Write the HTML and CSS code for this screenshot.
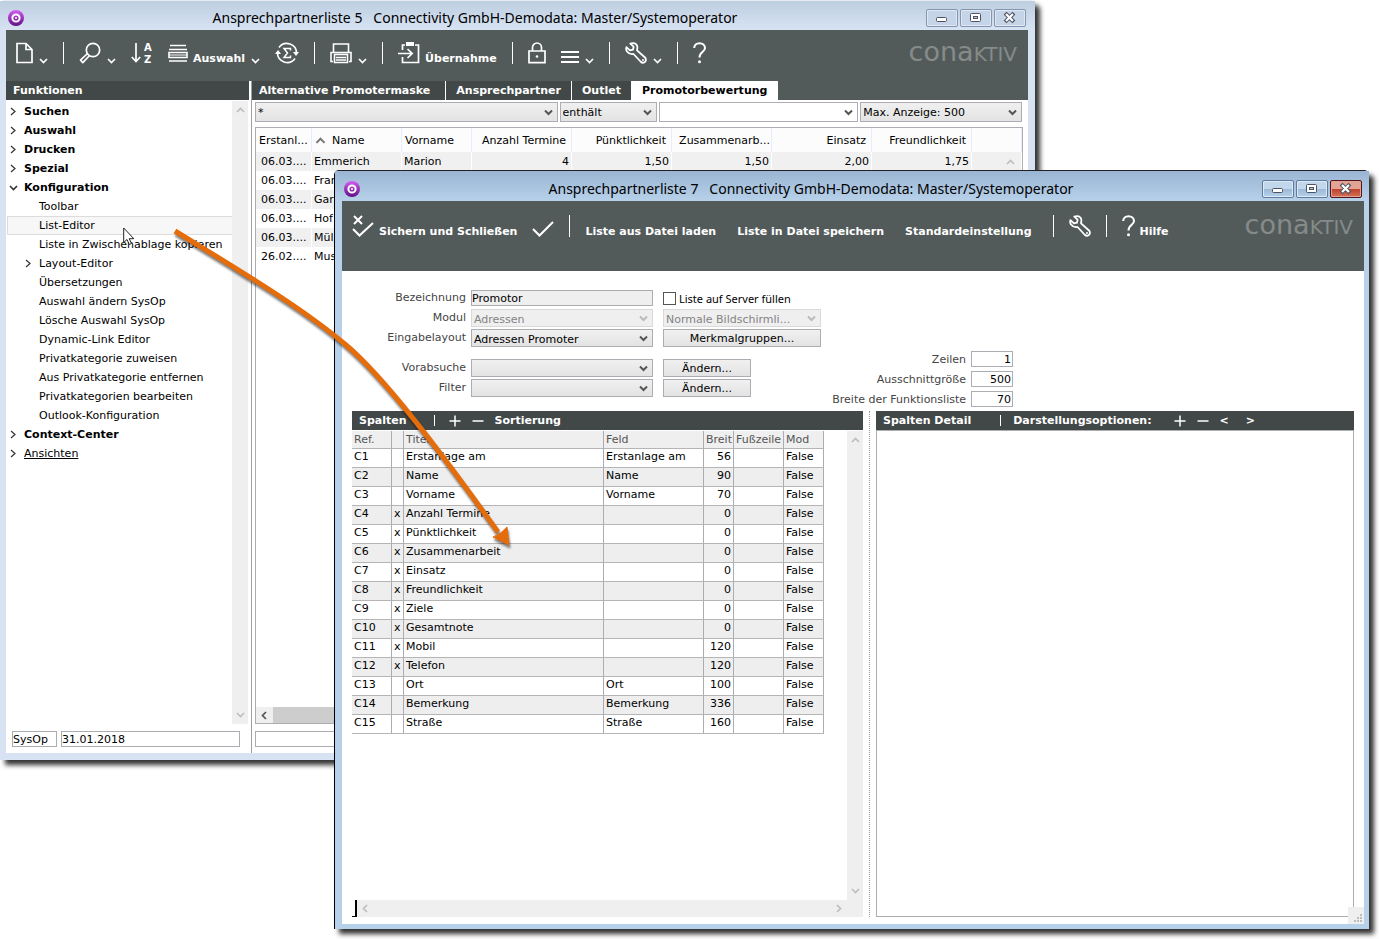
FILE: index.html
```html
<!DOCTYPE html>
<html lang="de">
<head>
<meta charset="utf-8">
<title>Ansprechpartnerliste</title>
<link rel="stylesheet" href="styles.css">
</head>
<body>
<svg class="symbols" aria-hidden="true">
  <defs>
    <linearGradient id="orb-fill" x1="0" y1="0" x2="0" y2="1"><stop offset="0" stop-color="#d65cf5"/><stop offset="1" stop-color="#5f0f82"/></linearGradient>
    <symbol id="orb" viewBox="0 0 16 16"><circle cx="8" cy="8" r="8" fill="url(#orb-fill)"/><circle cx="8" cy="8" r="3.6" fill="none" stroke="#fff" stroke-width="2"/><circle cx="8" cy="8" r="1" fill="#fff"/></symbol>
    <symbol id="down" viewBox="0 0 9 6"><path d="M1 1l3.500 3.500L8 1" fill="none" stroke="currentColor" stroke-width="1.600"/></symbol>
    <symbol id="wrench" viewBox="0 0 22 22"><path d="M8 1.200C10.500 1.200 12.500 3 12.400 5.500L12 8.300L20 15.500C21.500 17 21 19.500 19.500 20.300C18 21.200 16.600 20.600 15.500 19.500L8.500 12C6 12.500 3.500 11.500 2 9.500C1 8 1 6.500 1.400 5.200L5 8.400L8 7.700L8.600 4.700L5.300 1.600C6 1.300 7 1.200 8 1.200Z" fill="none" stroke="currentColor" stroke-width="1.800" stroke-linejoin="round"/><circle cx="18" cy="18" r="1" fill="currentColor"/></symbol>
    <symbol id="help" viewBox="0 0 13 22"><path d="M1.200 6C1.200 3 3.500 1.200 6.500 1.200S12 3.200 12 6C12 10 6.500 9.500 6.500 15.500" fill="none" stroke="currentColor" stroke-width="2"/><circle cx="6.500" cy="19.700" r="1.500" fill="currentColor"/></symbol>
    <symbol id="min" viewBox="0 0 32 18"><rect x="10.500" y="8.500" width="10" height="4" rx="1" fill="#fff" stroke="#4c5363"/></symbol>
    <symbol id="max" viewBox="0 0 32 18"><rect x="10.500" y="4.500" width="10" height="8" rx="1" fill="#fff" stroke="#4c5363"/><rect x="13.500" y="7.500" width="4" height="2" fill="#b8cbe0" stroke="#4c5363"/></symbol>
    <symbol id="close" viewBox="0 0 32 18"><path d="M12.500 5.500l6 6M18.500 5.500l-6 6" stroke="#4c5363" stroke-width="4" stroke-linecap="square"/><path d="M12 5l7 7M19 5l-7 7" stroke="#fff" stroke-width="2.200"/></symbol>
    <symbol id="right" viewBox="0 0 6 9"><path d="M1 1l4 3.500L1 8" fill="none" stroke="currentColor" stroke-width="1.200"/></symbol>
    <symbol id="bar-up" viewBox="0 0 9 6"><path d="M1 5l3.500-3.500L8 5" fill="none" stroke="currentColor" stroke-width="1.700"/></symbol>
    <symbol id="bar-left" viewBox="0 0 6 9"><path d="M5 1L1.500 4.500L5 8" fill="none" stroke="currentColor" stroke-width="1.700"/></symbol>
    <symbol id="bar-right" viewBox="0 0 6 9"><path d="M1 1l3.500 3.500L1 8" fill="none" stroke="currentColor" stroke-width="1.700"/></symbol>
    <symbol id="plus" viewBox="0 0 12 12"><path d="M6 .5v11M.5 6h11" stroke="currentColor" stroke-width="1.500"/></symbol>
    <symbol id="minus" viewBox="0 0 12 12"><path d="M.5 6h11" stroke="currentColor" stroke-width="1.500"/></symbol>
  </defs>
</svg>

<main class="desktop">
  <section class="window window-back">
    <header class="titlebar">
      <svg class="orb"><use href="#orb"/></svg>
      <h1 class="title">Ansprechpartnerliste 5 &nbsp; Connectivity GmbH-Demodata: Master/Systemoperator</h1>
      <div class="controls">
        <button class="control" aria-label="Minimieren"><svg><use href="#min"/></svg></button>
        <button class="control" aria-label="Maximieren"><svg><use href="#max"/></svg></button>
        <button class="control" aria-label="Schließen"><svg><use href="#close"/></svg></button>
      </div>
    </header>
    <nav class="toolbar">
      <button class="tool" aria-label="Neu"><svg class="icon w17" viewBox="0 0 17 22"><path d="M1 1.500h9l6 6v13H1zM10 1.500v6h6" fill="none" stroke="currentColor" stroke-width="1.700"/></svg><svg class="chev"><use href="#down"/></svg></button>
      <span class="sep"></span>
      <button class="tool" aria-label="Suchen"><svg class="icon w22" viewBox="0 0 22 22"><circle cx="14" cy="8" r="6.700" fill="none" stroke="currentColor" stroke-width="1.700"/><path d="M8.500 11.500L1.500 18.200L3.800 20.600L10.600 13.500" fill="none" stroke="currentColor" stroke-width="1.700" stroke-linejoin="round"/></svg><svg class="chev"><use href="#down"/></svg></button>
      <button class="tool" aria-label="Sortieren"><svg class="icon w22" viewBox="0 0 22 22"><path d="M5 1v18M.8 15L5 19.500L9.200 15" fill="none" stroke="currentColor" stroke-width="1.700"/><text x="13" y="9" class="sort-text">A</text><text x="13" y="21" class="sort-text">Z</text></svg></button>
      <button class="tool"><svg class="icon w20" viewBox="0 0 20 22"><path d="M2 3.500h16M1 7.500h18M1 10.500h18v5H1zM1 19h18" fill="none" stroke="currentColor" stroke-width="1.600"/><path d="M1 13h18" stroke="currentColor"/></svg><span>Auswahl</span><svg class="chev"><use href="#down"/></svg></button>
      <button class="tool" aria-label="Summen"><svg class="icon w24" viewBox="0 0 24 22"><path d="M4 5.500A9.700 9.700 0 0 1 21.500 11.500M20 16.500A9.700 9.700 0 0 1 2.500 10.500" fill="none" stroke="currentColor" stroke-width="1.600"/><path d="M18 10h6l-3 4zM0 12h6L3 8z" fill="currentColor"/><path d="M15.500 8.500v-2H9l3.500 4.500L9 15.500h6.500v-2" fill="none" stroke="currentColor" stroke-width="1.500"/></svg></button>
      <span class="sep"></span>
      <button class="tool" aria-label="Drucken"><svg class="icon w22" viewBox="0 0 22 22"><path d="M3.500 10V2h15v8M3 19.500H1V10.500h20v9h-2M4.500 12.500h13v8h-13zM6 15.500h10M6 18h10" fill="none" stroke="currentColor" stroke-width="1.600"/></svg><svg class="chev"><use href="#down"/></svg></button>
      <span class="sep"></span>
      <button class="tool"><svg class="icon w22" viewBox="0 0 22 22"><path d="M4.500 8V3H7M17 3h3.500v17.500h-16V15M0 11.500h14M9.500 7l4.700 4.500L9.500 16" fill="none" stroke="currentColor" stroke-width="1.700"/><path d="M8 0h8v4H8z" fill="currentColor"/></svg><span>Übernahme</span></button>
      <span class="sep"></span>
      <button class="tool" aria-label="Sperren"><svg class="icon w18" viewBox="0 0 18 22"><path d="M1 9h16v11.700H1zM4.500 9V5.500a4.500 4.500 0 0 1 9 0V9" fill="none" stroke="currentColor" stroke-width="1.700"/><circle cx="9" cy="14.500" r="1.300" fill="currentColor"/></svg></button>
      <button class="tool" aria-label="Menü"><svg class="icon w18" viewBox="0 0 18 22"><path d="M0 10h18M0 15h18M0 20h18" stroke="currentColor" stroke-width="2"/></svg><svg class="chev"><use href="#down"/></svg></button>
      <span class="sep"></span>
      <button class="tool" aria-label="Werkzeuge"><svg class="icon w22"><use href="#wrench"/></svg><svg class="chev"><use href="#down"/></svg></button>
      <span class="sep"></span>
      <button class="tool" aria-label="Hilfe"><svg class="icon w13"><use href="#help"/></svg></button>
      <span class="logo">cona<span class="logo-caps">KTIV</span></span>
    </nav>
    <div class="workspace">
      <aside class="sidebar">
        <h2 class="bar">Funktionen</h2>
        <div class="tree-area">
          <ul class="tree">
            <li class="node top"><svg class="arrow"><use href="#right"/></svg>Suchen</li>
            <li class="node top"><svg class="arrow"><use href="#right"/></svg>Auswahl</li>
            <li class="node top"><svg class="arrow"><use href="#right"/></svg>Drucken</li>
            <li class="node top"><svg class="arrow"><use href="#right"/></svg>Spezial</li>
            <li class="node top"><svg class="arrow open"><use href="#down"/></svg>Konfiguration</li>
            <li class="node sub">Toolbar</li>
            <li class="node sub selected">List-Editor</li>
            <li class="node sub">Liste in Zwischenablage kopieren</li>
            <li class="node sub parent"><svg class="arrow"><use href="#right"/></svg>Layout-Editor</li>
            <li class="node sub">Übersetzungen</li>
            <li class="node sub">Auswahl ändern SysOp</li>
            <li class="node sub">Lösche Auswahl SysOp</li>
            <li class="node sub">Dynamic-Link Editor</li>
            <li class="node sub">Privatkategorie zuweisen</li>
            <li class="node sub">Aus Privatkategorie entfernen</li>
            <li class="node sub">Privatkategorien bearbeiten</li>
            <li class="node sub">Outlook-Konfiguration</li>
            <li class="node top"><svg class="arrow"><use href="#right"/></svg>Context-Center</li>
            <li class="node"><svg class="arrow"><use href="#right"/></svg><u>Ansichten</u></li>
          </ul>
          <div class="vbar"><svg class="chev"><use href="#bar-up"/></svg><svg class="chev"><use href="#down"/></svg></div>
        </div>
        <div class="status">
          <input class="box user" value="SysOp" aria-label="Benutzer">
          <input class="box date" value="31.01.2018" aria-label="Datum">
        </div>
      </aside>
      <div class="content">
        <div class="tabs">
          <button class="tab">Alternative Promotermaske</button>
          <button class="tab">Ansprechpartner</button>
          <button class="tab">Outlet</button>
          <button class="tab active">Promotorbewertung</button>
        </div>
        <div class="filters">
          <select class="select" aria-label="Feld"><option>*</option></select>
          <select class="select" aria-label="Operator"><option>enthält</option></select>
          <select class="select blank" aria-label="Suchwert"><option></option></select>
          <select class="select" aria-label="Anzeige"><option>Max. Anzeige: 500</option></select>
        </div>
        <div class="list">
          <table class="people">
            <colgroup><col class="c56"><col class="c90"><col class="c70"><col class="c100"><col class="c100"><col class="c100"><col class="c100"><col class="c100"><col></colgroup>
            <thead><tr><th>Erstanl...</th><th><svg class="sort"><use href="#bar-up"/></svg>Name</th><th>Vorname</th><th class="num">Anzahl Termine</th><th class="num">Pünktlichkeit</th><th class="num tight">Zusammenarb...</th><th class="num">Einsatz</th><th class="num">Freundlichkeit</th><th></th></tr></thead>
            <tbody>
              <tr><td>06.03....</td><td>Emmerich</td><td>Marion</td><td class="num">4</td><td class="num">1,50</td><td class="num">1,50</td><td class="num">2,00</td><td class="num">1,75</td><td class="last"><svg class="chev"><use href="#bar-up"/></svg></td></tr>
              <tr><td>06.03....</td><td>Fran</td><td></td><td></td><td></td><td></td><td></td><td></td><td></td></tr>
              <tr><td>06.03....</td><td>Gar</td><td></td><td></td><td></td><td></td><td></td><td></td><td></td></tr>
              <tr><td>06.03....</td><td>Hof</td><td></td><td></td><td></td><td></td><td></td><td></td><td></td></tr>
              <tr><td>06.03....</td><td>Mül</td><td></td><td></td><td></td><td></td><td></td><td></td><td></td></tr>
              <tr><td>26.02....</td><td>Mus</td><td></td><td></td><td></td><td></td><td></td><td></td><td></td></tr>
            </tbody>
          </table>
          <div class="list-scroll"><svg class="side"><use href="#bar-left"/></svg><span class="thumb"></span></div>
        </div>
        <div class="status main-status"><input class="box wide" aria-label="Status"></div>
      </div>
    </div>
  </section>

  <section class="window window-front">
    <header class="titlebar">
      <svg class="orb"><use href="#orb"/></svg>
      <h1 class="title">Ansprechpartnerliste 7 &nbsp; Connectivity GmbH-Demodata: Master/Systemoperator</h1>
      <div class="controls">
        <button class="control" aria-label="Minimieren"><svg><use href="#min"/></svg></button>
        <button class="control" aria-label="Maximieren"><svg><use href="#max"/></svg></button>
        <button class="control red" aria-label="Schließen"><svg><use href="#close"/></svg></button>
      </div>
    </header>
    <nav class="toolbar">
      <button class="tool"><svg class="icon w22" viewBox="0 0 22 22"><path d="M2 1l8 8M10 1L2 9M1 14l6.500 6.500L21 8" fill="none" stroke="currentColor" stroke-width="2"/></svg><span>Sichern und Schließen</span></button>
      <button class="tool" aria-label="Sichern"><svg class="icon w22" viewBox="0 0 22 22"><path d="M1 14l6.500 6.500L21 7" fill="none" stroke="currentColor" stroke-width="2"/></svg></button>
      <span class="sep"></span>
      <button class="tool text-tool">Liste aus Datei laden</button>
      <button class="tool text-tool">Liste in Datei speichern</button>
      <button class="tool text-tool">Standardeinstellung</button>
      <span class="sep"></span>
      <button class="tool" aria-label="Werkzeuge"><svg class="icon w22"><use href="#wrench"/></svg></button>
      <span class="sep"></span>
      <button class="tool"><svg class="icon w13"><use href="#help"/></svg><span>Hilfe</span></button>
      <span class="logo">cona<span class="logo-caps">KTIV</span></span>
    </nav>
    <div class="editor">
      <form class="form">
        <div class="fields">
          <label for="name">Bezeichnung</label><input id="name" class="box grey" value="Promotor">
          <span class="check"><input type="checkbox" id="fill"><label for="fill">Liste auf Server füllen</label></span>
          <label for="module">Modul</label><select id="module" class="select" disabled><option>Adressen</option></select>
          <select class="select medium" disabled aria-label="Listentyp"><option>Normale Bildschirmli...</option></select>
          <label for="layout">Eingabelayout</label><select id="layout" class="select"><option>Adressen Promoter</option></select>
          <button type="button" class="push medium">Merkmalgruppen...</button>
          <label for="pre" class="spaced">Vorabsuche</label><select id="pre" class="select spaced"><option></option></select>
          <button type="button" class="push spaced">Ändern...</button>
          <label for="filter">Filter</label><select id="filter" class="select"><option></option></select>
          <button type="button" class="push">Ändern...</button>
        </div>
        <div class="sizes">
          <label for="rows">Zeilen</label><input id="rows" class="box num" value="1">
          <label for="cut">Ausschnittgröße</label><input id="cut" class="box num" value="500">
          <label for="width">Breite der Funktionsliste</label><input id="width" class="box num" value="70">
        </div>
      </form>
      <div class="panels">
        <section class="panel">
          <header class="bar panel-bar"><h2>Spalten</h2><span class="tick"></span><button class="mini" aria-label="Hinzufügen"><svg class="sign"><use href="#plus"/></svg></button><button class="mini" aria-label="Entfernen"><svg class="sign"><use href="#minus"/></svg></button><button class="mini">Sortierung</button></header>
          <div class="sheet-area">
            <table class="sheet">
              <colgroup><col class="c40"><col class="c12"><col class="c200"><col class="c100"><col class="c30"><col class="c50"><col class="c40"></colgroup>
              <thead><tr><th>Ref.</th><th></th><th>Titel</th><th>Feld</th><th>Breit</th><th>Fußzeile</th><th>Mod</th></tr></thead>
              <tbody>
                <tr><td>C1</td><td></td><td>Erstanlage am</td><td>Erstanlage am</td><td class="num">56</td><td></td><td>False</td></tr>
                <tr><td>C2</td><td></td><td>Name</td><td>Name</td><td class="num">90</td><td></td><td>False</td></tr>
                <tr><td>C3</td><td></td><td>Vorname</td><td>Vorname</td><td class="num">70</td><td></td><td>False</td></tr>
                <tr><td>C4</td><td>x</td><td>Anzahl Termine</td><td></td><td class="num">0</td><td></td><td>False</td></tr>
                <tr><td>C5</td><td>x</td><td>Pünktlichkeit</td><td></td><td class="num">0</td><td></td><td>False</td></tr>
                <tr><td>C6</td><td>x</td><td>Zusammenarbeit</td><td></td><td class="num">0</td><td></td><td>False</td></tr>
                <tr><td>C7</td><td>x</td><td>Einsatz</td><td></td><td class="num">0</td><td></td><td>False</td></tr>
                <tr><td>C8</td><td>x</td><td>Freundlichkeit</td><td></td><td class="num">0</td><td></td><td>False</td></tr>
                <tr><td>C9</td><td>x</td><td>Ziele</td><td></td><td class="num">0</td><td></td><td>False</td></tr>
                <tr><td>C10</td><td>x</td><td>Gesamtnote</td><td></td><td class="num">0</td><td></td><td>False</td></tr>
                <tr><td>C11</td><td>x</td><td>Mobil</td><td></td><td class="num">120</td><td></td><td>False</td></tr>
                <tr><td>C12</td><td>x</td><td>Telefon</td><td></td><td class="num">120</td><td></td><td>False</td></tr>
                <tr><td>C13</td><td></td><td>Ort</td><td>Ort</td><td class="num">100</td><td></td><td>False</td></tr>
                <tr><td>C14</td><td></td><td>Bemerkung</td><td>Bemerkung</td><td class="num">336</td><td></td><td>False</td></tr>
                <tr><td>C15</td><td></td><td>Straße</td><td>Straße</td><td class="num">160</td><td></td><td>False</td></tr>
              </tbody>
            </table>
            <div class="vbar"><svg class="chev"><use href="#bar-up"/></svg><svg class="chev"><use href="#down"/></svg></div>
          </div>
          <div class="hbar"><span class="knob"></span><div class="track"><svg class="side"><use href="#bar-left"/></svg><svg class="side"><use href="#bar-right"/></svg></div></div>
        </section>
        <span class="split"></span>
        <section class="panel detail">
          <header class="bar panel-bar"><h2>Spalten Detail</h2><span class="tick"></span><span class="options">Darstellungsoptionen:</span><button class="mini" aria-label="Hinzufügen"><svg class="sign"><use href="#plus"/></svg></button><button class="mini" aria-label="Entfernen"><svg class="sign"><use href="#minus"/></svg></button><button class="mini">&lt;</button><button class="mini next">&gt;</button></header>
          <div class="detail-body"></div>
        </section>
      </div>
    </div>
    <svg class="grip" viewBox="0 0 16 17"><path d="M12 7h2v2h-2zM9 10h2v2H9zM12 10h2v2h-2zM6 13h2v2H6zM9 13h2v2H9zM12 13h2v2h-2z" fill="#bdbdbd"/></svg>
  </section>

  <svg class="pointer" viewBox="0 0 12 19" aria-hidden="true"><path d="M.7 1v14.500L4 12.500l2.300 5 2.200-1-2.300-4.800h4.600z" fill="#fff" stroke="#222"/></svg>
  <svg class="callout" viewBox="0 0 360 340" aria-hidden="true"><path d="M15 11C75 48 140 86 186 125C225 158 282 234 338 312" fill="none" stroke="#e46c0a" stroke-width="5"/><path d="M349 325L333 317Q340 315 347 307Z" fill="#e46c0a" stroke="#e46c0a"/></svg>
</main>
</body>
</html>
```
FILE: styles.css
```css
* { box-sizing: border-box; }
body {
  margin: 0;
  background: #fff;
  color: #000;
  font: 11px/19px "DejaVu Sans", Verdana, sans-serif;
}
button, input, select { font: inherit; color: inherit; margin: 0; padding: 0; border: 0; border-radius: 0; background: none; }
h1, h2, ul { margin: 0; padding: 0; font-size: inherit; }
ul { list-style: none; }
svg { display: block; flex: none; }
table { border-collapse: separate; border-spacing: 0; table-layout: fixed; }
th, td { padding: 0; font-weight: normal; text-align: left; white-space: nowrap; overflow: hidden; }
.num { text-align: right; }
.symbols { position: absolute; width: 0; height: 0; }

.desktop { position: relative; min-height: 100vh; overflow: hidden; }
.window {
  position: absolute;
  display: flex;
  flex-direction: column;
  border-radius: 5px 5px 0 0;
  box-shadow: 5px 5px 5px rgba(0, 0, 0, .8);
}
.window-back { inset: 0 344px 179px 0; padding: 0 7px 7px 6px; background: #d7e3f3; border-top: 1px solid #e6e9ed; }
.window-front {
  inset: 170px 10px 10px 334px;
  padding: 0 5px 5px 7px;
  background: #b7d1ea;
  border-left: 1px solid #000;
  border-top: 1px solid #222;
}

.titlebar { display: flex; align-items: center; height: 30px; padding: 5px 2px 0; flex: none; }
.window-back .titlebar { height: 29px; background: linear-gradient(#bdcee0, #d7e3f3); margin: 0 -7px 0 -6px; padding: 5px 9px 0 8px; }
.window-front .titlebar { background: linear-gradient(#9ab5d3, #b7d1ea); margin: 0 -5px 0 -7px; padding: 5px 7px 0 9px; }
.orb { width: 16px; height: 16px; }
.title { flex: 1; font: 14px/20px "Noto Sans", "Open Sans", sans-serif; text-align: center; white-space: nowrap; }
.controls { display: flex; gap: 2px; }
.control { width: 32px; height: 18px; border: 1px solid #8594b0; border-radius: 2px; background: #c5d5e7; box-shadow: inset 0 0 0 1px #dfe9f3; }
.control svg { width: 32px; height: 18px; margin: -1px; }
.window-front .control { background: linear-gradient(#c3d7ec 50%, #9cb8d6 50%, #b6d1ea); border-color: #5e7ba0; }
.window-front .red { background: linear-gradient(#e3a494 50%, #bf402a 50%, #d37358); border-color: #51141c; box-shadow: inset 0 0 0 1px #e0a495; }

.toolbar { display: flex; align-items: flex-end; gap: 15px; height: 51px; padding: 0 11px 17px 10px; background: #535b5a; color: #fff; font-weight: bold; flex: none; }
.window-front .toolbar { height: 70px; padding-bottom: 34px; }
.tool { display: flex; align-items: flex-end; gap: 5px; line-height: 11px; white-space: nowrap; }
.text-tool { margin-right: 6px; }
.icon { height: 22px; }
.w13 { width: 13px; }
.w17 { width: 17px; }
.w18 { width: 18px; }
.w20 { width: 20px; }
.w22 { width: 22px; }
.w24 { width: 24px; }
.chev { width: 9px; height: 6px; }
.toolbar .chev { margin-left: 1px; }
.sep { width: 1px; height: 22px; background: #fff; }
.sort-text { font: bold 10px "DejaVu Sans", sans-serif; fill: #fff; }
.logo { margin-left: auto; color: #858b8a; font: 27px/20px "DejaVu Sans", sans-serif; }
.logo-caps { font-size: 20px; }

.workspace { flex: 1; display: flex; min-height: 0; background: #fff; }
.bar { height: 19px; flex: none; padding: 0 7px; background: #424847; color: #fff; font-weight: bold; line-height: 19px; }
.sidebar { display: flex; flex-direction: column; width: 243px; flex: none; }
.tree-area { flex: 1; display: flex; padding: 1px 1px 0 1px; min-height: 0; }
.tree { flex: 1; padding-top: 1px; white-space: nowrap; }
.node { display: flex; align-items: center; height: 19px; padding-left: 17px; }
.top { font-weight: bold; }
.sub { padding-left: 32px; }
.arrow { width: 6px; height: 9px; margin: 0 8px 0 -14px; color: #333; }
.arrow.open { width: 9px; height: 6px; margin: 0 6px 0 -15px; }
.selected { background: #f7f7f7; border: 1px solid #dcdcdc; border-right: 0; padding-left: 31px; }
.vbar { display: flex; flex-direction: column; justify-content: space-between; align-items: center; width: 16px; padding: 6px 0; background: #efefef; color: #bdbdbd; flex: none; }
.status { display: flex; gap: 4px; padding: 7px 9px 5px 6px; height: 29px; flex: none; }
.box { height: 16px; border: 1px solid #abadb3; background: #fff; color: #000; line-height: 14px; min-width: 0; }
.box.num { padding-right: 1px; }
.box.grey { background: #efefef; }
.user { width: 45px; }
.date { flex: 1; }
.wide { flex: 1; }

.content { flex: 1; display: flex; flex-direction: column; min-width: 0; margin-left: 2px; border-left: 1px solid #a0a0a0; }
.tabs { display: flex; gap: 1px; height: 19px; background: #535b5a; flex: none; }
.tab { padding: 0 10px; background: #424847; color: #fff; font-weight: bold; box-shadow: 1px 0 #fff; white-space: nowrap; }
.tab:first-child { padding: 0 15px 0 7px; }
.tab.active { background: #fff; color: #000; }
.filters { display: grid; grid-template-columns: 303fr 98fr 199fr 162fr; gap: 2px; padding: 2px 6px 5px 3px; flex: none; }
.select {
  appearance: none;
  width: 100%;
  height: 20px;
  padding: 0 18px 0 2px;
  border: 1px solid #abadb3;
  background: url("data:image/svg+xml,%3Csvg xmlns='http://www.w3.org/2000/svg' width='9' height='7'%3E%3Cpath d='M1 1.500l3.500 3.500L8 1.500' fill='none' stroke='%23555' stroke-width='2'/%3E%3C/svg%3E") no-repeat right 4px center, linear-gradient(#f0f0f0, #e3e3e3);
}
.select.blank { background-color: #fff; background-image: url("data:image/svg+xml,%3Csvg xmlns='http://www.w3.org/2000/svg' width='9' height='7'%3E%3Cpath d='M1 1.500l3.500 3.500L8 1.500' fill='none' stroke='%23555' stroke-width='2'/%3E%3C/svg%3E"); }
.select:disabled { opacity: 1; color: #838383; border-color: #d9d9d9; background: url("data:image/svg+xml,%3Csvg xmlns='http://www.w3.org/2000/svg' width='9' height='7'%3E%3Cpath d='M1 1.500l3.500 3.500L8 1.500' fill='none' stroke='%23bbb' stroke-width='2'/%3E%3C/svg%3E") no-repeat right 4px center #efefef; }
.list { flex: 1; display: flex; flex-direction: column; justify-content: space-between; margin: 0 5px 0 3px; border: 1px solid #abadb3; min-height: 0; }
.people { width: 100%; }
.people th { height: 24px; padding: 0 3px; background: #fcfcfc; border-right: 1px solid #e5eefa; }
.people th.num { padding-right: 5px; }
.people th.tight { padding-right: 1px; }
.people td { height: 19px; padding: 0 2px; border-right: 1px solid #fff; }
.people td:first-child { padding-left: 5px; }
.people tbody tr:nth-child(odd) { background: #f0f0f0; }
.sort { display: inline-block; width: 11px; height: 7px; margin-right: 6px; color: #777; }
.last .chev { margin: 0 4px 0 auto; color: #bdbdbd; }
.c12 { width: 12px; }
.c30 { width: 30px; }
.c40 { width: 40px; }
.c50 { width: 50px; }
.c56 { width: 56px; }
.c70 { width: 70px; }
.c90 { width: 90px; }
.c100 { width: 100px; }
.c200 { width: 200px; }
.list-scroll { display: flex; align-items: center; gap: 6px; height: 16px; padding-left: 5px; background: #efefef; color: #555; }
.thumb { flex: 1; height: 16px; background: #cdcdcd; }
.side { width: 6px; height: 9px; }
.main-status { padding: 7px 6px 5px 3px; }

.editor { flex: 1; display: flex; flex-direction: column; min-height: 0; padding: 17px 10px 7px; background: #fff; }
.form { display: flex; justify-content: space-between; color: #444; flex: none; height: 123px; }
.fields { display: grid; grid-template-columns: 114px 182px 158px; column-gap: 5px; align-content: start; align-items: center; }
.fields > :nth-child(3n) { margin-left: 5px; }
.fields > label { text-align: right; height: 20px; line-height: 20px; }
.fields .select { height: 18px; color: #000; }
.fields .select:disabled { color: #838383; }
.fields > .spaced { margin-top: 10px; }
.medium { width: 158px; }
.push { width: 88px; height: 18px; border: 1px solid #abadb3; background: linear-gradient(#f0f0f0, #e3e3e3); color: #000; line-height: 18px; }
.push.medium { width: 158px; }
.check { display: flex; align-items: center; gap: 3px; color: #000; font: 11px/19px "Noto Sans", "Open Sans", sans-serif; white-space: nowrap; }
.check input { appearance: none; width: 13px; height: 13px; border: 1px solid #555; background: #fff; }
.sizes { display: grid; grid-template-columns: max-content 42px; grid-auto-rows: 20px; gap: 0 5px; align-content: start; align-items: center; margin: 61px 341px 0 0; text-align: right; }
.panels { flex: 1; display: grid; grid-template-columns: 511fr auto 478fr; column-gap: 6px; min-height: 0; }
.panel { display: flex; flex-direction: column; min-width: 0; }
.panel-bar { display: flex; align-items: center; }
.mini { color: #fff; font-weight: bold; margin-right: 11px; }
.mini.next { margin-left: 6px; }
.sign { width: 12px; height: 12px; }
.tick { width: 1px; height: 11px; margin: 0 14px 0 27px; background: #fff; }
.detail .tick { margin: 0 12px 0 29px; }
.options { margin-right: 22px; }
.sheet-area { flex: 1; display: flex; justify-content: space-between; align-items: stretch; min-height: 0; padding-top: 1px; }
.sheet { width: 472px; align-self: flex-start; }
.sheet th { height: 18px; padding: 0 2px; background: #efefef; color: #555; line-height: 17px; }
.sheet th, .sheet td { border-right: 1px solid #abadb3; border-bottom: 1px solid #b5b5b5; }
.sheet td { height: 19px; padding: 0 2px 2px; line-height: 16px; }
.sheet tbody tr:nth-child(even) { background: #eee; }
.hbar { display: flex; height: 17px; flex: none; }
.knob { width: 5px; border-right: 2px solid #000; border-bottom: 1px solid #000; }
.track { flex: 1; display: flex; align-items: center; justify-content: space-between; padding: 0 21px 0 5px; background: #efefef; color: #bdbdbd; }
.split { width: 1px; border-left: 1px dotted #999; }
.detail-body { flex: 1; border: 1px solid #abadb3; }
.grip { position: absolute; right: 5px; bottom: 5px; width: 16px; height: 17px; background: #efefef; }

.pointer { position: absolute; left: 123px; top: 227px; width: 12px; height: 19px; }
.callout { position: absolute; left: 160px; top: 220px; width: 360px; height: 340px; filter: drop-shadow(1px 3px 1px rgba(0, 0, 0, .5)); pointer-events: none; }
```
